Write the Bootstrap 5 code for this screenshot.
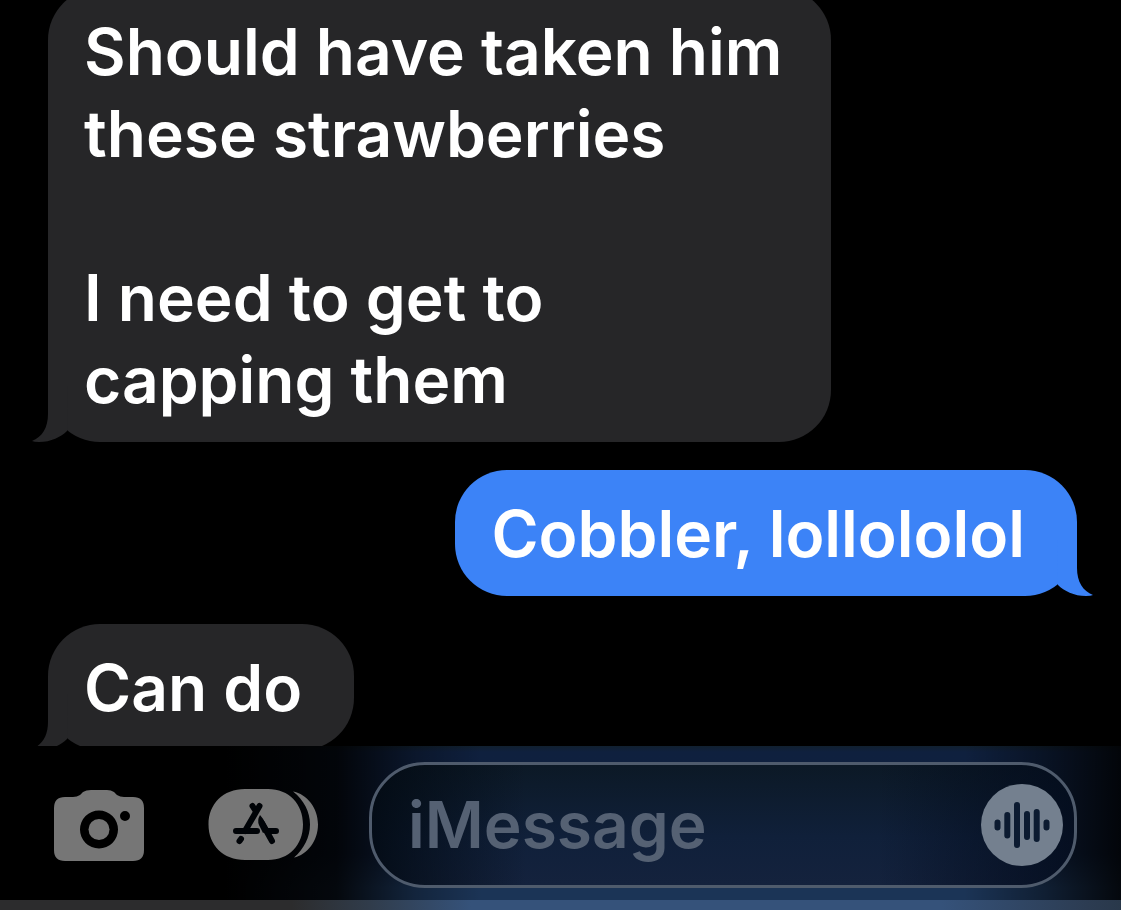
<!DOCTYPE html>
<html lang="en">
<head>
<meta charset="utf-8">
<meta name="viewport" content="width=device-width, initial-scale=1">
<title>Messages</title>
<link href="https://cdn.jsdelivr.net/npm/bootstrap@5.3.0/dist/css/bootstrap.min.css" rel="stylesheet">
<style>
body { background: #000; color: #fff; font-family: Inter, "Liberation Sans", sans-serif; }
.thread { min-height: 0; padding: 0 44px 0 48px; }
.log { gap: 28px; margin-top: -12px; }
.bubble { padding: 23px 52px 21px 36px; border-radius: 52px; background: #262628; font-size: 64px; line-height: 82px; font-weight: 600; max-width: 90%; }
.bubble-long { padding-right: 49px; }
.bubble-sent { background: #3c83f7; }
.tail { left: -16px; bottom: 0; width: 36px; height: 56px; fill: #262628; }
.bubble-sent .tail { left: auto; right: -16px; fill: #3c83f7; }
.composer { padding: 16px 44px 12px 54px;
  background:
    linear-gradient(90deg, #000 20%, rgba(0,0,0,.85) 30%, rgba(0,0,0,.3) 37%, transparent 43%, transparent 86%, rgba(0,0,0,.4) 93%, rgba(0,0,0,.85) 100%),
    linear-gradient(180deg, #11202f 0, #0f203e 6px, #0f2140 70%, #1b3456 92%, #1b3456 100%); }
.icon-btn { color: #767676; }
.field { border: 3px solid #4f5b6c; border-radius: 56px; height: 126px; padding: 0 11px 0 36px; margin-left: 51px;
  background: linear-gradient(90deg, rgba(2,9,17,.85) 0, transparent 22%, transparent 72%, rgba(2,10,26,.8) 100%), linear-gradient(180deg, #0c1926, #10203a 60%, #14223d); }
.field input { font-size: 64px; line-height: 82px; font-weight: 600; color: #fff; min-width: 0; }
.field input::placeholder { color: #556173; opacity: 1; }
.icon-gap { margin-left: 64px; }
.keyboard-edge { height: 10px; background: linear-gradient(90deg, #2c2c2d 26%, #303c4b 33%, #35527a 42%, #35527a 84%, #2c3c52 97%, #29384a 100%); }
</style>
</head>
<body>
<div class="vh-100 d-flex flex-column overflow-hidden">
  <main class="thread flex-grow-1 overflow-hidden">
    <div class="log d-flex flex-column">
      <div class="bubble bubble-long position-relative align-self-start">
        Should have taken him<br>these strawberries<br><br>I need to get to<br>capping them
        <svg class="tail position-absolute" viewBox="0 0 36 56" aria-hidden="true"><path d="M16 0V28C16 42 10 51 0 55Q2 56 7 56C19 56 29 51 35 45L36 0Z"/></svg>
      </div>
      <div class="bubble bubble-sent position-relative align-self-end">
        Cobbler, lollololol
        <svg class="tail position-absolute" viewBox="0 0 36 56" aria-hidden="true"><path d="M20 0V28C20 42 26 51 36 55Q34 56 29 56C17 56 7 51 1 45L0 0Z"/></svg>
      </div>
      <div class="bubble position-relative align-self-start">
        Can do
        <svg class="tail position-absolute" viewBox="0 0 36 56" aria-hidden="true"><path d="M16 0V28C16 42 10 51 0 55Q2 56 7 56C19 56 29 51 35 45L36 0Z"/></svg>
      </div>
    </div>
  </main>
  <footer class="flex-shrink-0">
    <form class="composer d-flex align-items-center">
      <button type="button" class="icon-btn btn p-0 border-0 d-flex" aria-label="Camera">
        <svg width="90" height="72" viewBox="0 -1 90 72">
          <path fill="currentColor" fill-rule="evenodd" d="M11 7H19Q23 7 26 5L29 2Q32 0 37 0H53Q57 0 60 2L63 5Q66 7 70 7H79Q90 7 90 18V60Q90 71 79 71H11Q0 71 0 60V18Q0 7 11 7ZM45 20.500A19 19 0 1 0 45 58.500A19 19 0 1 0 45 20.500ZM71 21A5 5 0 1 0 71 31A5 5 0 1 0 71 21Z"/>
          <circle cx="45" cy="39.500" r="10.500" fill="currentColor"/>
        </svg>
      </button>
      <button type="button" class="icon-btn icon-gap btn p-0 border-0 d-flex" aria-label="Apps">
        <svg width="110" height="72" viewBox="0 0 110 72">
          <path fill="currentColor" d="M37 0H60C81 0 95 15 95 35.500S81 71 60 71H37C15 71 .5 56 .5 35.500S15 0 37 0ZM85 2.500C99 5 110 19 110 35.500S99 66 86 68.500C96 60 102 48 102 35.500S96 11 85 2.500Z"/>
          <g fill="none" stroke="#000307" stroke-width="6" stroke-linecap="round">
            <path d="M51.500 17L37 42M44.500 17L48 22.500M28 42H49M61 42H68M33 50L31.500 52M64 52L54 34"/>
          </g>
          <path fill="#000307" d="M52 26Q55 29 57 34L61 41L55 44L51 36Q49 31 52 26Z"/>
        </svg>
      </button>
      <div class="field flex-grow-1 d-flex align-items-center">
        <input type="text" class="flex-grow-1 w-100 bg-transparent border-0 p-0" placeholder="iMessage" aria-label="iMessage">
        <button type="button" class="btn p-0 border-0 d-flex flex-shrink-0" aria-label="Record audio">
          <svg width="82" height="82" viewBox="0 0 82 82">
            <circle cx="41" cy="41" r="41" fill="#74808f"/>
            <path fill="none" stroke="#0c1b31" stroke-width="6" stroke-linecap="round" d="M16.500 38.500V43.500M26.300 31V51.500M36 21V61M46 30V53M55.700 28V55M65.500 38.500V43.500"/>
          </svg>
        </button>
      </div>
    </form>
    <div class="keyboard-edge"></div>
  </footer>
</div>
<script src="https://cdn.jsdelivr.net/npm/bootstrap@5.3.0/dist/js/bootstrap.bundle.min.js"></script>
</body>
</html>
